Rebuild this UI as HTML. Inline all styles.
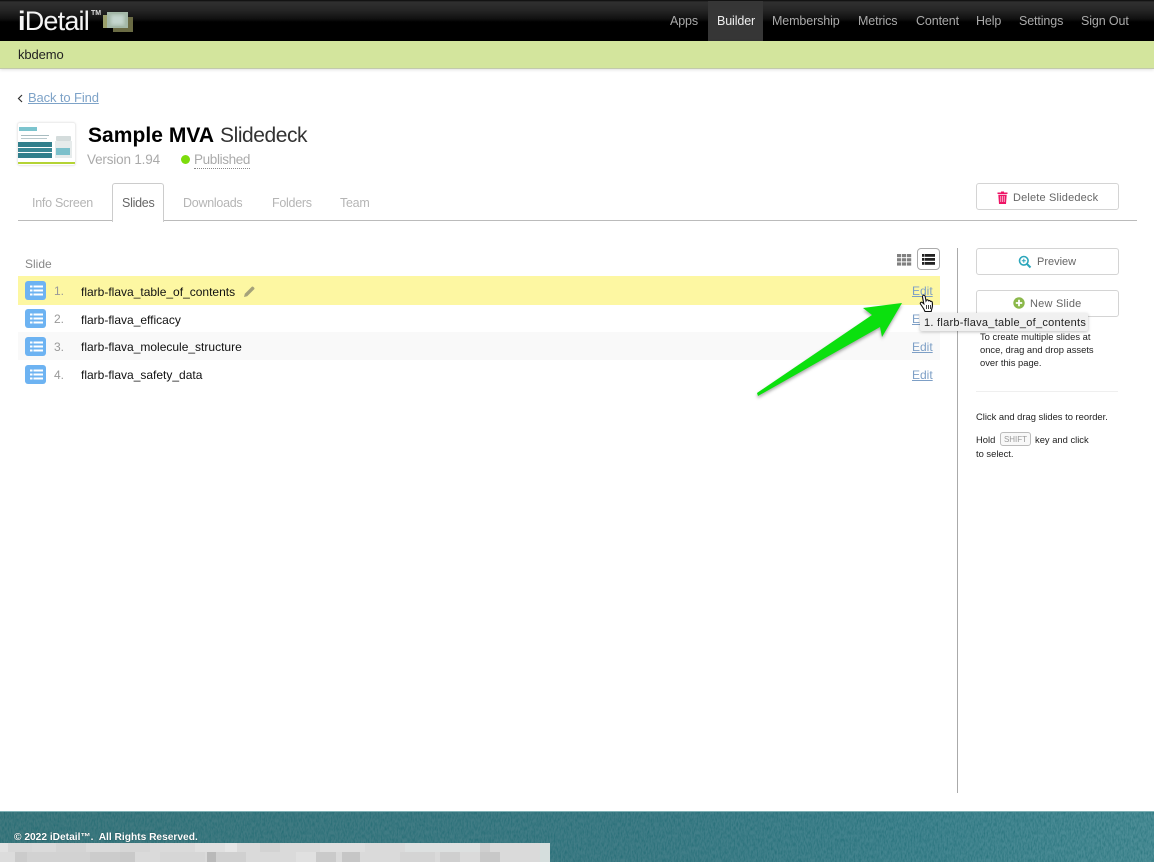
<!DOCTYPE html>
<html>
<head>
<meta charset="utf-8">
<style>
html,body{margin:0;padding:0;}
body{width:1154px;height:862px;position:relative;overflow:hidden;background:#fff;font-family:"Liberation Sans",sans-serif;color:#111;}
.a{position:absolute;white-space:nowrap;}
.nav{top:13px;font-size:12.5px;color:#aaa;line-height:16px;letter-spacing:-.12px;}
.tab{top:195px;font-size:12.5px;color:#b5b5b5;line-height:16px;letter-spacing:-.27px;}
.btn{position:absolute;left:976px;width:141px;height:25px;border:1px solid #d4d4d4;border-radius:3px;background:#fff;}
.btxt{font-size:11px;color:#666;line-height:14px;}
.row{position:absolute;left:18px;width:922px;height:28px;}
.ic{position:absolute;left:25px;width:21px;height:19px;background:#6db3f2;border-radius:3px;}
.num{left:54px;font-size:12px;color:#999;line-height:14px;}
.nm{left:81px;font-size:12px;color:#111;line-height:15px;}
.ed{left:912px;font-size:12px;color:#7d9fc6;text-decoration:underline;line-height:14px;}
.side{font-size:9.4px;color:#222;line-height:13px;}
.t{position:absolute;top:843px;height:9px;}
.u{position:absolute;top:852px;height:10px;}
</style>
</head>
<body>
<!-- header -->
<div class="a" style="left:0;top:0;width:1154px;height:41px;background:linear-gradient(#0a0a0a 0,#303030 2px,#262626 10px,#101010 19px,#000 22px,#000 41px);"></div>
<div class="a" style="left:18px;top:5px;font-size:27px;line-height:32px;color:#f4f4f4;letter-spacing:-.8px;font-weight:400;"><b>i</b>Detail</div>
<div class="a" style="left:91px;top:10px;font-size:7px;line-height:8px;color:#ddd;font-weight:700;">TM</div>
<svg class="a" style="left:103px;top:11px;" width="31" height="22" viewBox="0 0 31 22">
<defs><filter id="b"><feGaussianBlur stdDeviation="1.500"/></filter></defs>
<rect x="0" y="4" width="14" height="13" fill="#9a9f6a"/>
<rect x="10" y="6" width="20" height="15" fill="#6a6b44"/>
<rect x="4" y="1" width="21" height="16" fill="#a4b8a8"/>
<rect x="8" y="4" width="13" height="10" fill="#c4d6ce" filter="url(#b)"/>
</svg>
<div class="a" style="left:708px;top:1px;width:55px;height:40px;background:#363636;"></div>
<div class="a nav" style="left:670px;">Apps</div>
<div class="a nav" style="left:717px;color:#eee;">Builder</div>
<div class="a nav" style="left:772px;">Membership</div>
<div class="a nav" style="left:858px;">Metrics</div>
<div class="a nav" style="left:916px;">Content</div>
<div class="a nav" style="left:976px;">Help</div>
<div class="a nav" style="left:1019px;">Settings</div>
<div class="a nav" style="left:1081px;">Sign Out</div>

<!-- green bar -->
<div class="a" style="left:0;top:41px;width:1154px;height:27px;background:#d3e59d;border-bottom:1px solid #c2c9ad;box-shadow:0 1px 3px rgba(0,0,0,.12);"></div>
<div class="a" style="left:18px;top:47px;font-size:13px;line-height:16px;color:#222;letter-spacing:-.1px;">kbdemo</div>

<!-- back -->
<svg class="a" style="left:17px;top:94px;" width="7" height="9" viewBox="0 0 7 9"><path d="M5 1 L1.500 4.500 L5 8" fill="none" stroke="#333" stroke-width="1.200"/></svg>
<div class="a" style="left:28px;top:90px;font-size:13px;line-height:16px;color:#7ea3c8;text-decoration:underline;letter-spacing:-.12px;">Back to Find</div>

<!-- thumb -->
<div class="a" style="left:17px;top:122px;width:59px;height:44px;background:#fff;border:1px solid #eee;border-radius:3px;box-sizing:border-box;overflow:hidden;box-shadow:0 0 2px rgba(0,0,0,.08);">
<div class="a" style="left:1px;top:4px;width:18px;height:4px;background:#7cc4ce;"></div>
<div class="a" style="left:3px;top:12px;width:28px;height:1px;background:#a8bcc0;"></div>
<div class="a" style="left:3px;top:15px;width:26px;height:1px;background:#b8c8cc;"></div>
<div class="a" style="left:0;top:19px;width:34px;height:5px;background:#327f8c;"></div>
<div class="a" style="left:0;top:25px;width:34px;height:4px;background:#3a8794;"></div>
<div class="a" style="left:0;top:30px;width:34px;height:5px;background:#327f8c;"></div>
<div class="a" style="left:38px;top:13px;width:15px;height:5px;background:#d4dcdc;border-radius:1px;"></div>
<div class="a" style="left:37px;top:18px;width:17px;height:17px;background:#e6ebeb;"></div>
<div class="a" style="left:38px;top:25px;width:14px;height:7px;background:#7cc0cb;"></div>
<div class="a" style="left:0;top:39px;width:57px;height:2px;background:#b4d334;"></div>
</div>

<!-- title -->
<div class="a" style="left:88px;top:122px;font-size:21px;line-height:27px;color:#000;letter-spacing:.05px;"><b>Sample MVA</b> <span style="color:#333;font-weight:400;letter-spacing:-.45px;">Slidedeck</span></div>
<div class="a" style="left:87px;top:151px;font-size:13.5px;line-height:17px;color:#aaa;letter-spacing:-.18px;">Version 1.94</div>
<div class="a" style="left:181px;top:155px;width:9px;height:9px;background:#7ddc0c;border-radius:50%;"></div>
<div class="a" style="left:194px;top:151px;font-size:13.5px;line-height:17px;color:#aaa;letter-spacing:-.36px;border-bottom:1px dotted #888;">Published</div>

<!-- tabs -->
<div class="a" style="left:18px;top:220px;width:1119px;height:1px;background:#bbb;"></div>
<div class="a" style="left:112px;top:183px;width:50px;height:38px;background:#fff;border:1px solid #ccc;border-bottom:none;border-radius:3px 3px 0 0;"></div>
<div class="a tab" style="left:32px;">Info Screen</div>
<div class="a tab" style="left:122px;color:#666;">Slides</div>
<div class="a tab" style="left:183px;">Downloads</div>
<div class="a tab" style="left:272px;">Folders</div>
<div class="a tab" style="left:340px;">Team</div>

<!-- delete btn -->
<div class="btn" style="top:183px;"></div>
<svg class="a" style="left:997px;top:191px;" width="11" height="13" viewBox="0 0 11 13"><path d="M4 0.500h3v1h3.500v1.500H.5V1.500H4zM1.300 3.800h8.400L9 13H2z" fill="#ee1566"/><path d="M3.800 5v6M5.500 5v6M7.200 5v6" stroke="#fff" stroke-width=".6"/></svg>
<div class="a btxt" style="left:1013px;top:191px;letter-spacing:.17px;">Delete Slidedeck</div>

<!-- table head -->
<div class="a" style="left:25px;top:257px;font-size:12px;line-height:15px;color:#888;">Slide</div>
<svg class="a" style="left:897px;top:254px;" width="15" height="12" viewBox="0 0 15 12" fill="#808080"><rect x="0" y="0" width="4.200" height="3.200"/><rect x="5" y="0" width="4.200" height="3.200"/><rect x="10" y="0" width="4.200" height="3.200"/><rect x="0" y="4.200" width="4.200" height="3.200"/><rect x="5" y="4.200" width="4.200" height="3.200"/><rect x="10" y="4.200" width="4.200" height="3.200"/><rect x="0" y="8.400" width="4.200" height="3.200"/><rect x="5" y="8.400" width="4.200" height="3.200"/><rect x="10" y="8.400" width="4.200" height="3.200"/></svg>
<div class="a" style="left:917px;top:248px;width:21px;height:20px;border:1px solid #aaa;border-radius:4px;background:#fff;"></div>
<svg class="a" style="left:922px;top:254px;" width="13" height="11" viewBox="0 0 13 11" fill="#222"><rect x="0" y="0" width="2.500" height="2.800"/><rect x="3" y="0" width="10" height="2.800"/><rect x="0" y="4" width="2.500" height="2.800"/><rect x="3" y="4" width="10" height="2.800"/><rect x="0" y="8" width="2.500" height="2.800"/><rect x="3" y="8" width="10" height="2.800"/></svg>

<!-- rows -->
<div class="row" style="top:276px;height:29px;background:#fdf7a2;"></div>
<div class="row" style="top:332px;background:#f9f9f9;"></div>

<div class="ic" style="top:281px;"></div>
<div class="ic" style="top:309px;"></div>
<div class="ic" style="top:337px;"></div>
<div class="ic" style="top:365px;"></div>
<svg class="a" style="left:30px;top:285px;" width="13" height="11" viewBox="0 0 13 11" fill="#fff"><path d="M0 .5h2.500v2H0zM3.500 .5H13v2H3.500zM0 4.500h2.500v2H0zM3.500 4.500H13v2H3.500zM0 8.500h2.500v2H0zM3.500 8.500H13v2H3.500z"/></svg>
<svg class="a" style="left:30px;top:313px;" width="13" height="11" viewBox="0 0 13 11" fill="#fff"><path d="M0 .5h2.500v2H0zM3.500 .5H13v2H3.500zM0 4.500h2.500v2H0zM3.500 4.500H13v2H3.500zM0 8.500h2.500v2H0zM3.500 8.500H13v2H3.500z"/></svg>
<svg class="a" style="left:30px;top:341px;" width="13" height="11" viewBox="0 0 13 11" fill="#fff"><path d="M0 .5h2.500v2H0zM3.500 .5H13v2H3.500zM0 4.500h2.500v2H0zM3.500 4.500H13v2H3.500zM0 8.500h2.500v2H0zM3.500 8.500H13v2H3.500z"/></svg>
<svg class="a" style="left:30px;top:369px;" width="13" height="11" viewBox="0 0 13 11" fill="#fff"><path d="M0 .5h2.500v2H0zM3.500 .5H13v2H3.500zM0 4.500h2.500v2H0zM3.500 4.500H13v2H3.500zM0 8.500h2.500v2H0zM3.500 8.500H13v2H3.500z"/></svg>

<div class="a num" style="top:284px;">1.</div>
<div class="a num" style="top:312px;">2.</div>
<div class="a num" style="top:340px;">3.</div>
<div class="a num" style="top:368px;">4.</div>
<div class="a nm" style="top:285px;">flarb-flava_table_of_contents</div>
<div class="a nm" style="top:313px;">flarb-flava_efficacy</div>
<div class="a nm" style="top:340px;">flarb-flava_molecule_structure</div>
<div class="a nm" style="top:368px;">flarb-flava_safety_data</div>
<svg class="a" style="left:244px;top:286px;" width="11" height="11" viewBox="0 0 11 11"><path d="M0 11l.8-3.200L7.800.8a1 1 0 0 1 1.400 0l1 1a1 1 0 0 1 0 1.400L3.200 10.200z" fill="#a5a27a"/></svg>
<div class="a ed" style="top:284px;">Edit</div>
<div class="a ed" style="top:312px;">Edit</div>
<div class="a ed" style="top:340px;">Edit</div>
<div class="a ed" style="top:368px;">Edit</div>

<!-- divider -->
<div class="a" style="left:957px;top:248px;width:1px;height:545px;background:#aaa;"></div>

<!-- side -->
<div class="btn" style="top:248px;"></div>
<svg class="a" style="left:1018px;top:255px;" width="14" height="14" viewBox="0 0 14 14"><circle cx="5.800" cy="5.800" r="4.300" fill="none" stroke="#2ba6bb" stroke-width="1.600"/><path d="M9 9l3.500 3.500" stroke="#2ba6bb" stroke-width="2"/><path d="M3.800 5.800h4M5.800 3.800v4" stroke="#2ba6bb" stroke-width="1"/></svg>
<div class="a btxt" style="left:1037px;top:255px;">Preview</div>
<div class="btn" style="top:290px;"></div>
<svg class="a" style="left:1013px;top:297px;" width="12" height="12" viewBox="0 0 12 12"><circle cx="6" cy="6" r="5.700" fill="#8bb84a"/><path d="M2.800 6h6.400M6 2.800v6.400" stroke="#fff" stroke-width="1.800"/></svg>
<div class="a btxt" style="left:1030px;top:297px;letter-spacing:.22px;">New Slide</div>

<div class="a side" style="left:980px;top:330px;">To create multiple slides at<br>once, drag and drop assets<br>over this page.</div>
<div class="a" style="left:976px;top:391px;width:142px;height:1px;background:#efefef;"></div>
<div class="a side" style="left:976px;top:410px;">Click and drag slides to reorder.</div>
<div class="a side" style="left:976px;top:433px;">Hold</div>
<div class="a" style="left:1000px;top:432px;width:29px;height:12px;border:1px solid #bbb;border-radius:3px;font-size:8px;line-height:13px;text-align:center;color:#999;background:#f8f8f8;">SHIFT</div>
<div class="a side" style="left:1035px;top:433px;">key and click</div>
<div class="a side" style="left:976px;top:447px;">to select.</div>

<!-- tooltip -->
<div class="a" style="left:920px;top:313px;width:168px;height:18px;background:#f0f0f0;border-radius:2px;box-shadow:0 1px 3px rgba(0,0,0,.25);font-size:11px;line-height:20px;color:#222;text-indent:4px;letter-spacing:.27px;">1. flarb-flava_table_of_contents</div>

<!-- cursor -->
<svg class="a" style="left:919px;top:294px;" width="16" height="19" viewBox="0 0 16 19"><path d="M4 1.500c1-.8 2 0 2.200 1L7 7l.5-1c1-.5 1.700 0 2 .8.800-.6 1.700-.2 1.900.6.800-.3 1.700 0 1.900 1 .3 2 .2 4.500-.5 6.500l-.6 2.600H6l-1.200-2.500L1.500 10c-.7-1.200.6-2.300 1.800-1.500l1.500 1.300L3.500 3c-.1-.6 0-1.100.5-1.500z" fill="#fff" stroke="#111" stroke-width="1.100"/><path d="M7.500 11v4M9.500 11v4M11.500 11v4" stroke="#111" stroke-width=".8"/></svg>

<!-- arrow -->
<svg class="a" style="left:750px;top:295px;" width="160" height="110" viewBox="0 0 160 110">
<defs><filter id="s" x="-10%" y="-10%" width="120%" height="120%"><feGaussianBlur stdDeviation="1.500"/></filter></defs>
<path d="M7 98 L122 20 L113 13 L152 8 L132 42 L130 32 L8 101 Z" fill="rgba(0,0,0,.35)" filter="url(#s)" transform="translate(0,2)"/>
<path d="M7 98 L122 20 L113 13 L152 8 L132 42 L130 32 L8 101 Z" fill="#0be00e"/>
</svg>

<!-- footer -->
<svg class="a" style="left:0;top:811px;" width="1154" height="51" viewBox="0 0 1154 51">
<defs>
<linearGradient id="g" x1="0" x2="1" y1="0" y2="0"><stop offset="0" stop-color="#40797f"/><stop offset=".55" stop-color="#417d87"/><stop offset=".8" stop-color="#438590"/><stop offset="1" stop-color="#4d8e97"/></linearGradient>
<filter id="n" x="0" y="0" width="100%" height="100%"><feTurbulence type="fractalNoise" baseFrequency="0.7 0.25" numOctaves="2" seed="4"/><feColorMatrix values="0 0 0 0 0  0 0 0 0 .1  0 0 0 0 .12  .8 0 0 0 -.28"/></filter>
</defs>
<rect width="1154" height="51" fill="url(#g)"/>
<rect width="1154" height="51" filter="url(#n)"/>
<rect width="1154" height="1" fill="#7fb0b5"/>
</svg>
<div class="a" style="left:14px;top:831px;font-size:10.2px;line-height:14px;color:#fff;font-weight:700;text-shadow:0 0 1px rgba(0,0,0,.5);">© 2022 iDetail™.&nbsp; All Rights Reserved.</div>

<!-- pixelated block -->
<div class="a" style="left:0;top:843px;width:550px;height:19px;background:#dadada;"></div>
<div class="t" style="left:0;width:8px;background:#e2e2e2;"></div>
<div class="t" style="left:8px;width:24px;background:#d8d8d8;"></div>
<div class="t" style="left:56px;width:30px;background:#d4d4d4;"></div>
<div class="t" style="left:120px;width:30px;background:#d6d6d6;"></div>
<div class="t" style="left:195px;width:30px;background:#e0e0e0;"></div>
<div class="t" style="left:225px;width:12px;background:#e6e6e6;"></div>
<div class="t" style="left:260px;width:20px;background:#d3d3d3;"></div>
<div class="t" style="left:320px;width:45px;background:#dfdfdf;"></div>
<div class="t" style="left:405px;width:75px;background:#dde0e0;"></div>
<div class="t" style="left:480px;width:10px;background:#cfcfcf;"></div>
<div class="u" style="left:0;width:15px;background:#dcdcdc;"></div>
<div class="u" style="left:15px;width:12px;background:#cbcbcb;"></div>
<div class="u" style="left:27px;width:63px;background:#d2d2d2;"></div>
<div class="u" style="left:90px;width:30px;background:#cccccc;"></div>
<div class="u" style="left:120px;width:15px;background:#c9c9c9;"></div>
<div class="u" style="left:160px;width:45px;background:#d6d6d6;"></div>
<div class="u" style="left:207px;width:9px;background:#b9b9b9;"></div>
<div class="u" style="left:216px;width:30px;background:#d0d0d0;"></div>
<div class="u" style="left:296px;width:24px;background:#e0e0e0;"></div>
<div class="u" style="left:316px;width:20px;background:#cacaca;"></div>
<div class="u" style="left:342px;width:18px;background:#c6c6c6;"></div>
<div class="u" style="left:400px;width:35px;background:#d4d4d4;"></div>
<div class="u" style="left:440px;width:20px;background:#cfcfcf;"></div>
<div class="u" style="left:480px;width:20px;background:#c8c8c8;"></div>
<div class="a" style="left:540px;top:843px;width:10px;height:19px;background:#d5dedd;"></div>
</body>
</html>
